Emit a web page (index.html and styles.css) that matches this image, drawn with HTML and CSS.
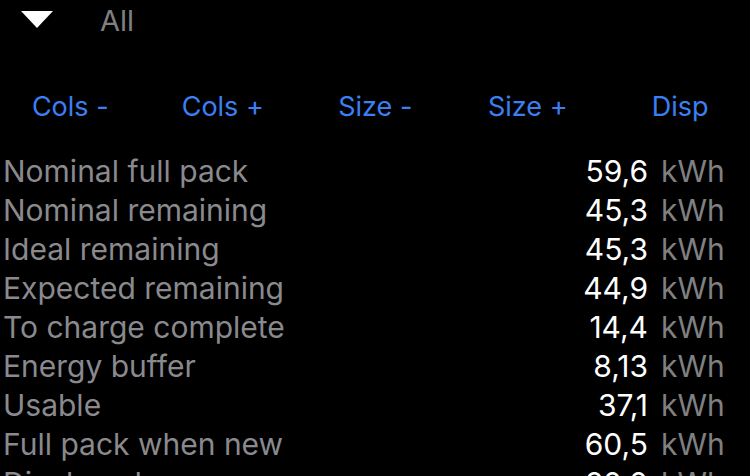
FILE: index.html
```html
<!DOCTYPE html>
<html lang="en">

<head>
    <meta charset="UTF-8">
    <meta name="viewport" content="width=device-width, initial-scale=1.0">
    <title>Battery</title>
    <link rel="stylesheet" href="styles.css">
</head>

<body>
    <!-- Фільтр -->
    <div class="filter">
        <svg class="arrow" width="32" height="17" viewBox="0 0 32 17">
            <path d="M0 0 H32 L16 17 Z" fill="#ffffff"/>
        </svg>
        <span class="filter-name">All</span>
    </div>

    <!-- Кнопки -->
    <div class="toolbar">
        <button>Cols -</button>
        <button>Cols +</button>
        <button>Size -</button>
        <button>Size +</button>
        <button>Disp</button>
    </div>

    <!-- Значення -->
    <div class="values">
        <div class="row"><span class="label">Nominal full pack</span><span class="num">59,6</span><span class="unit">kWh</span></div>
        <div class="row"><span class="label">Nominal remaining</span><span class="num">45,3</span><span class="unit">kWh</span></div>
        <div class="row"><span class="label">Ideal remaining</span><span class="num">45,3</span><span class="unit">kWh</span></div>
        <div class="row"><span class="label">Expected remaining</span><span class="num">44,9</span><span class="unit">kWh</span></div>
        <div class="row"><span class="label">To charge complete</span><span class="num">14,4</span><span class="unit">kWh</span></div>
        <div class="row"><span class="label">Energy buffer</span><span class="num">8,13</span><span class="unit">kWh</span></div>
        <div class="row"><span class="label">Usable</span><span class="num">37,1</span><span class="unit">kWh</span></div>
        <div class="row"><span class="label">Full pack when new</span><span class="num">60,5</span><span class="unit">kWh</span></div>
        <div class="row"><span class="label">Displayed</span><span class="num">60,0</span><span class="unit">kWh</span></div>
    </div>
</body>

</html>
```

FILE: styles.css
```css
body {
    margin: 0;
    background-color: #000000;
    font-family: Inter, "Noto Sans", sans-serif;
    color: #8a8a8e;
    overflow: hidden;
}

.filter {
    display: flex;
    align-items: center;
    height: 40px;
    padding-left: 21px;
}

.filter .arrow {
    margin-top: -2px;
}

.filter-name {
    margin-left: 47px;
    font-size: 29px;
    color: #808080;
}

.toolbar {
    display: grid;
    grid-template-columns: repeat(5, 152.5px);
    margin-left: -6px;
    margin-top: 50px;
}

.toolbar button {
    background: none;
    border: none;
    padding: 0;
    font-family: inherit;
    font-size: 27px;
    color: #3a80f4;
    cursor: pointer;
}

.values {
    margin-top: 29px;
}

.values .row {
    display: grid;
    grid-template-columns: 1fr auto 102px;
    height: 39px;
    line-height: 39px;
    font-size: 30px;
    padding-left: 3px;
}

.values .num {
    color: #ffffff;
    text-align: right;
}

.values .unit {
    padding-left: 13px;
    color: #808080;
}
```
